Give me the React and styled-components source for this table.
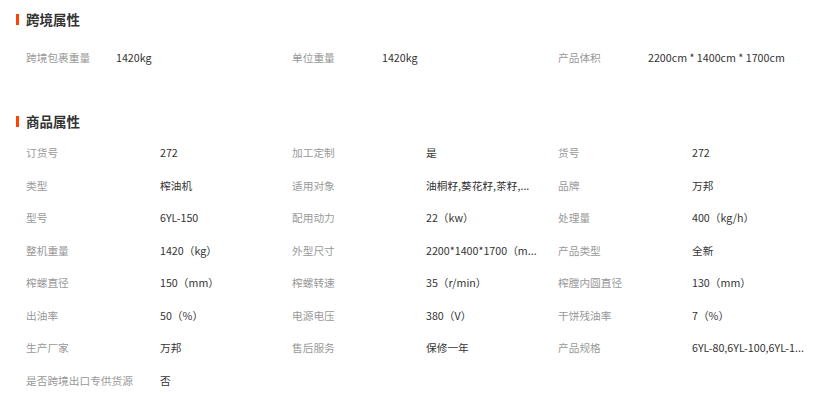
import React from "react";
import styled, { createGlobalStyle } from "styled-components";

const Global = createGlobalStyle`
  html, body { margin: 0; padding: 0; background: #fff; }
  body { font-family: "Noto Sans CJK SC", "Noto Sans", sans-serif; }
`;

const Page = styled.div`
  padding: 8px 0 0 16px;
  width: 814px;
  box-sizing: border-box;
`;

const Section = styled.section`
  margin-top: ${(p) => p.$top || 0}px;
`;

const Title = styled.h3`
  margin: 0;
  height: 22px;
  line-height: 22px;
  display: flex;
  align-items: center;
  gap: 7px;
  font-size: 13.5px;
  font-weight: 700;
  color: #333;
  &::before {
    content: "";
    display: block;
    width: 3px;
    height: 11px;
    background: #ff4400;
  }
`;

const Grid = styled.div`
  display: grid;
  grid-template-columns: repeat(3, 266px);
  padding-left: 10px;
  margin-top: ${(p) => p.$top}px;
`;

const Item = styled.div`
  display: flex;
  height: 32.5px;
  align-items: center;
  font-size: 10.7px;
  white-space: nowrap;
`;

const Label = styled.span`
  width: ${(p) => p.$w}px;
  flex: none;
  color: #999;
`;

const Value = styled.span`
  color: #333;
`;

const cross = [
  ["跨境包裹重量", "1420kg"],
  ["单位重量", "1420kg"],
  ["产品体积", "2200cm * 1400cm * 1700cm"],
];

const attrs = [
  ["订货号", "272"],
  ["加工定制", "是"],
  ["货号", "272"],
  ["类型", "榨油机"],
  ["适用对象", "油桐籽,葵花籽,茶籽,..."],
  ["品牌", "万邦"],
  ["型号", "6YL-150"],
  ["配用动力", "22（kw）"],
  ["处理量", "400（kg/h）"],
  ["整机重量", "1420（kg）"],
  ["外型尺寸", "2200*1400*1700（m..."],
  ["产品类型", "全新"],
  ["榨螺直径", "150（mm）"],
  ["榨螺转速", "35（r/min）"],
  ["榨膛内圆直径", "130（mm）"],
  ["出油率", "50（%）"],
  ["电源电压", "380（V）"],
  ["干饼残油率", "7（%）"],
  ["生产厂家", "万邦"],
  ["售后服务", "保修一年"],
  ["产品规格", "6YL-80,6YL-100,6YL-1..."],
  ["是否跨境出口专供货源", "否"],
];

export default function App() {
  return (
    <Page>
      <Global />
      <Section>
        <Title>跨境属性</Title>
        <Grid $top={10.75}>
          {cross.map(([l, v]) => (
            <Item key={l}>
              <Label $w={90}>{l}</Label>
              <Value>{v}</Value>
            </Item>
          ))}
        </Grid>
      </Section>
      <Section $top={37}>
        <Title>商品属性</Title>
        <Grid $top={4.2}>
          {attrs.map(([l, v]) => (
            <Item key={l}>
              <Label $w={134}>{l}</Label>
              <Value>{v}</Value>
            </Item>
          ))}
        </Grid>
      </Section>
    </Page>
  );
}
